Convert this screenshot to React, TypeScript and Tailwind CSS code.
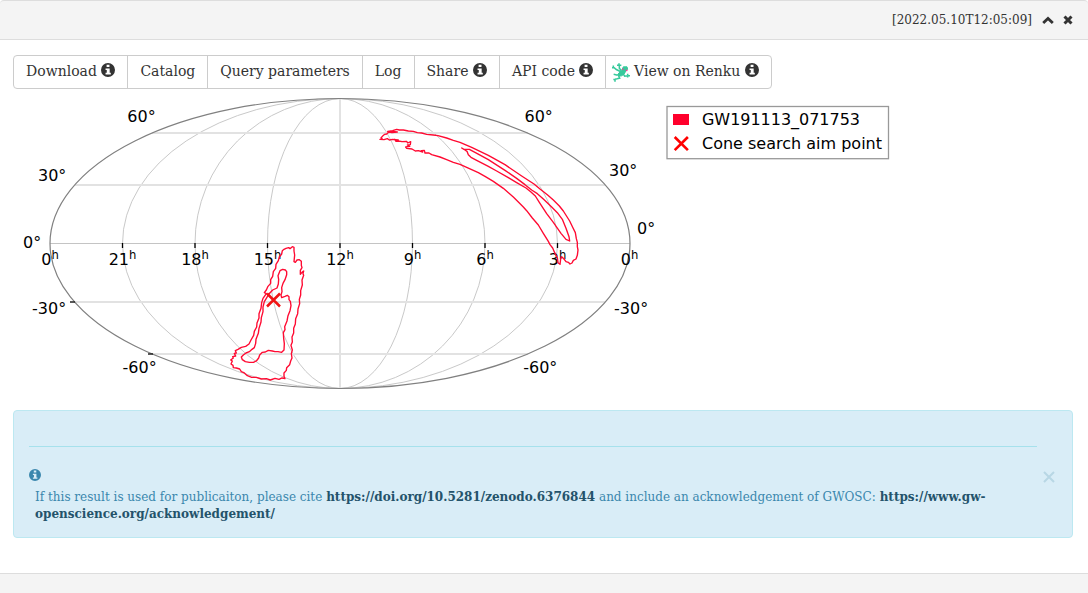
import type { ReactNode } from 'react';

const INFO =
  'M8 0a8 8 0 1 0 0 16A8 8 0 0 0 8 0Zm-1.6 2h3.3v2.6H6.4V2Zm-1.2 4.2h4.7v5h1.3v1.9H5.2v-1.9h1.4V8.1H5.2V6.2Z';

function Info({ className }: { className: string }) {
  return (
    <svg viewBox="0 0 16 16" className={className} fill="currentColor">
      <path d={INFO} fillRule="evenodd" />
    </svg>
  );
}

function Gecko() {
  return (
    <svg viewBox="0 0 54 56" className="mt-0.5 h-[19px] w-[18px] shrink-0" fill="none" stroke="#37c99c">
      <path d="M34 11 45 11 47 18 41 24 37 32 29 38 19 39 17 34 24 26 29 22Z" fill="#37c99c" strokeWidth="3" />
      <path d="M0 14h8M4 7v6M7 14l6 5 12 6M21 0v6M15 6h13M22 6v9l6 7M34 33l4 6 8-1M47 32v5M47 38h7M47 38v5M17 36l-12-3M20 39l3 6-8 2-6 1M4 49h7M9 48v8" strokeWidth="4.6" />
      <path d="m31 17 3 3M42 20l4 3" stroke="#f0419c" strokeWidth="4.5" />
    </svg>
  );
}

function Btn({ children, info, className = 'px-3' }: { children: ReactNode; info?: boolean; className?: string }) {
  return (
    <button className={`-ml-px flex h-[34px] items-center border border-[#ccc] bg-white whitespace-nowrap first:ml-0 first:rounded-l last:rounded-r ${className}`}>
      <span className="-mt-0.5 leading-5">{children}</span>
      {info && <Info className="-mt-[5px] ml-[4.5px] h-3.5 w-3.5 shrink-0" />}
    </button>
  );
}

const hours = [
  { x: 50, t: '0' }, { x: 122.5, t: '21' }, { x: 195, t: '18' }, { x: 267.5, t: '15' },
  { x: 340, t: '12' }, { x: 412.5, t: '9' }, { x: 485, t: '6' }, { x: 557.5, t: '3' }, { x: 629.5, t: '0' },
];

const degrees = [
  { x: 127.3, y: 122, t: '60°' }, { x: 38, y: 181, t: '30°' }, { x: 23, y: 248, t: '0°' },
  { x: 32, y: 314, t: '-30°' }, { x: 122.5, y: 373, t: '-60°' },
  { x: 524.5, y: 122, t: '60°' }, { x: 609, y: 176, t: '30°' }, { x: 637, y: 234, t: '0°' },
  { x: 614, y: 314, t: '-30°' }, { x: 523.2, y: 373, t: '-60°' },
];

// Sky localisation contours, in thirds of a pixel from each region's corner.
const NORTH_OUTER =
  '60,88 67,87 63,84 69,77 74,73 80,72 84,68 96,64 112,66 96,68 88,66 83,64 98,62 110,58 118,60 130,60 145,63 160,64 172,68 185,69 200,73 220,75 234,77 260,84 280,91 300,97 335,112 385,136 435,164 485,198 522,222 540,237 562,254 580,270 598,288 610,303 629,333 638,352 646,368 649,386 652,397 652,410 654,420 652,436 648,447 640,451 636,459 630,462 625,457 618,455 612,447 605,440 602,447 600,463 594,458 592,443 584,428 578,414 570,404 565,394 550,370 535,345 517,324 500,302 490,291 460,261 430,235 400,214 375,199 355,188 320,172 300,163 280,157 260,149 240,141 215,134 207,129 195,129 193,121 184,122 188,126 175,122 166,123 156,117 140,115 137,111 149,109 142,105 151,104 152,95 143,99 140,94 126,95 116,93 108,94 104,88 110,92 115,90 98,88 88,90 82,86 72,89';
const NORTH_INNER =
  '305,114 312,118 328,118 345,127 385,149 435,181 470,205 495,224 515,240 532,251 550,267 575,291 592,308 607,328 618,355 627,380 629,393 618,388 603,370 580,337 560,311 538,277 526,258 512,245 498,234 470,218 445,203 410,183 385,169 350,151 333,142 325,134 321,124 315,120';
const SOUTH_OUTER =
  '222,43 228,40 236,38 240,41 247,35 252,37 252,48 254,60 252,80 256,82 261,75 268,74 274,79 274,91 276,98 271,106 271,118 276,112 281,108 279,116 281,121 276,135 277,150 272,167 272,180 268,193 269,206 264,222 263,236 257,251 256,267 251,280 251,294 246,306 247,321 243,331 247,345 244,356 246,369 242,378 239,389 230,398 229,406 222,414 222,424 225,431 216,429 207,433 195,430 181,435 169,431 154,432 139,427 125,427 112,422 103,414 94,410 89,402 79,399 70,398 69,391 63,387 67,378 62,375 70,369 68,365 77,363 73,355 79,354 76,347 84,343 94,337 107,334 117,327 123,315 131,301 133,289 140,276 141,264 147,249 147,236 153,220 155,203 159,190 169,176 163,173 169,165 174,154 182,145 182,134 188,124 190,110 197,100 198,88 205,77 208,66 215,57 217,47';
const SOUTH_INNER =
  '210,107 218,103 226,105 230,110 230,119 225,134 219,145 215,158 216,170 213,180 215,188 225,184 232,181 237,185 237,194 241,199 243,212 240,227 234,242 231,258 224,275 225,284 220,293 221,310 223,326 222,345 215,352 204,350 195,350 187,348 175,346 166,351 157,352 149,360 146,369 139,378 130,382 118,382 106,380 97,374 94,366 100,360 108,354 118,350 126,343 133,338 137,325 138,313 145,295 147,280 153,261 154,248 159,230 159,216 163,200 169,190 176,178 188,165 201,159 205,147 206,133 204,122';

function SkyMap() {
  return (
    <svg viewBox="0 89 900 321" className="block h-[321px] w-[900px]" fontFamily="'DejaVu Sans', sans-serif" fontSize="16">
      <g fill="none" stroke="#c9c9c9" strokeWidth="1">
        <ellipse cx="340" cy="243.5" rx="72.5" ry="145" />
        <ellipse cx="340" cy="243.5" rx="145" ry="145" />
        <ellipse cx="340" cy="243.5" rx="217.5" ry="145" />
        <path d="M50 243.5H630" stroke="#c4c4c4" />
        <path d="M340 98.5v290M152 133h376M75 185h530M75 302h530M152 354h376" stroke="#e2e2e2" strokeWidth="2" />
      </g>
      <ellipse cx="340" cy="243.5" rx="290" ry="145" fill="none" stroke="#808080" strokeWidth="1.2" />
      <path d="M122.5 243v5M195 243v5M267.5 243v5M340 243v5M412.5 243v5M485 243v5M557.5 243v5" stroke="#000" strokeWidth="1.3" />
      <path d="M70 302h5M148 354h5" stroke="#222" strokeWidth="1.6" />
      {degrees.map((d, i) => <text key={i} x={d.x} y={d.y}>{d.t}</text>)}
      {hours.map((h, i) => (
        <text key={i} x={h.x} y="265" textAnchor="middle">
          {h.t}<tspan fontSize="11.6" dy="-6.4">h</tspan>
        </text>
      ))}
      <g fill="none" stroke="#ff0a32" strokeWidth="4.1" strokeLinejoin="round">
        <g transform="translate(360 110) scale(.33333)">
          <polygon points={NORTH_OUTER} />
          <polygon points={NORTH_INNER} />
        </g>
        <g transform="translate(210 235) scale(.33333)">
          <polygon points={SOUTH_OUTER} />
          <polygon points={SOUTH_INNER} />
        </g>
      </g>
      <path d="m267 293.5 13 13m0-13-13 13" stroke="#f01414" strokeWidth="2.5" />
      <rect x="667" y="106.5" width="221.5" height="52.2" fill="#fff" stroke="#999" strokeWidth="1.3" />
      <rect x="673" y="114" width="16" height="11" fill="#ff002c" />
      <path d="m674.7 137 13.2 13.2m0-13.2-13.2 13.2" stroke="red" strokeWidth="2.6" />
      <text x="702" y="125" textLength="158">GW191113_071753</text>
      <text x="702" y="149" textLength="180">Cone search aim point</text>
    </svg>
  );
}

export default function App() {
  return (
    <div className="flex h-[593px] flex-col overflow-hidden bg-white font-['DejaVu_Serif',serif] text-sm text-[#333]">
      <header className="flex h-10 shrink-0 items-center justify-end rounded-t border-y border-[#ddd] bg-[#f4f4f4] pr-[15px] text-xs">
        <span>[2022.05.10T12:05:09]</span>
        <svg viewBox="0 0 12 12" className="ml-2.5 h-3 w-3" fill="none" stroke="currentColor" strokeWidth="2.8">
          <path d="m1.2 9 4.8-4.6L10.8 9" />
        </svg>
        <svg viewBox="0 0 10 10" className="ml-[9px] h-2.5 w-2.5" fill="none" stroke="currentColor" strokeWidth="3">
          <path d="m1.5 1.5 7 7m0-7-7 7" />
        </svg>
      </header>
      <main className="flex h-[533px] shrink-0 flex-col">
        <div className="mt-[15px] ml-[13px] flex h-[34px] shrink-0">
          <Btn info>Download</Btn>
          <Btn>Catalog</Btn>
          <Btn>Query parameters</Btn>
          <Btn>Log</Btn>
          <Btn info>Share</Btn>
          <Btn info>API code</Btn>
          <Btn info className="pr-3 pl-1.5">
            <span className="flex items-center gap-[3.6px]"><Gecko />View on Renku</span>
          </Btn>
        </div>
        <SkyMap />
        <section className="mr-[15px] ml-[13px] flex h-32 shrink-0 rounded border border-[#bce8f1] bg-[#d9edf7] pl-[15px] text-xs text-[#3a87ad]">
          <div className="w-[1008px]">
            <hr className="mt-[35px] border-[#a6e1ec]" />
            <Info className="mt-[22px] h-3 w-3" />
            <p className="mt-2 ml-1.5 w-[970px] leading-[17px]">
              If this result is used for publicaiton, please cite{' '}
              <b className="text-[#24536b]">https://doi.org/10.5281/zenodo.6376844</b> and include an acknowledgement of GWOSC:{' '}
              <b className="text-[#24536b]">https://www.gw-<br />openscience.org/acknowledgement/</b>
            </p>
          </div>
          <svg viewBox="0 0 12 12" className="mt-[59.5px] ml-[6px] h-3 w-3" stroke="#b8d7e5" strokeWidth="2">
            <path d="m1 1 10 10m0-10L1 11" />
          </svg>
        </section>
      </main>
      <footer className="h-5 shrink-0 border-t border-[#ddd] bg-[#f4f4f4]" />
    </div>
  );
}
